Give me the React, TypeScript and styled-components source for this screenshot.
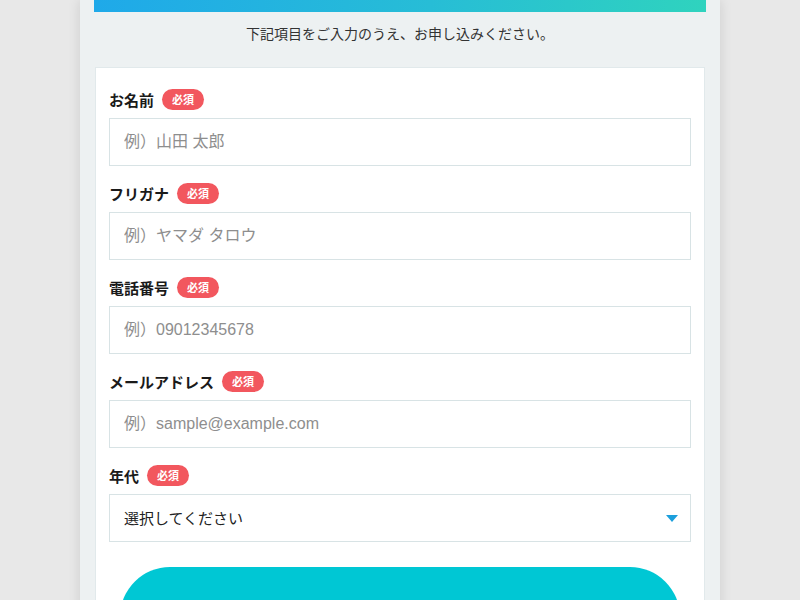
import React from 'react';
import styled, { createGlobalStyle } from 'styled-components';

const GlobalStyle = createGlobalStyle`
  html, body {
    margin: 0;
    padding: 0;
    background: #e8e8e8;
    overflow: hidden;
  }
  body {
    font-family: "Liberation Sans", "Noto Sans CJK JP", sans-serif;
    color: #222;
  }
  * {
    box-sizing: border-box;
  }
`;

const Page = styled.div`
  width: 640px;
  min-height: 600px;
  margin: 0 auto;
  padding: 0 14px;
  background: #edf1f2;
  box-shadow: 0 0 12px rgba(0, 0, 0, 0.12);
`;

const HeaderBar = styled.div`
  height: 12px;
  background: linear-gradient(90deg, #1fa9e9 0%, #27bdd6 55%, #2fd3be 100%);
`;

const Lead = styled.p`
  margin: 0;
  padding: 12px 0 0;
  height: 55px;
  text-align: center;
  font-size: 14px;
  line-height: 20px;
  color: #333;
`;

const Card = styled.form`
  background: #fff;
  border: 1px solid #e1e9eb;
  margin: 0 1px;
  padding: 20px 13px 0;
  display: flex;
  flex-direction: column;
`;

const Field = styled.div`
  display: flex;
  flex-direction: column;
  margin-bottom: 16px;
`;

const LabelRow = styled.label`
  display: flex;
  align-items: center;
  gap: 8px;
  height: 22px;
  margin-bottom: 8px;
  font-size: 15px;
  font-weight: 700;
  color: #1a1a1a;
`;

const Required = styled.span`
  display: inline-flex;
  align-items: center;
  justify-content: center;
  height: 21px;
  padding: 0 10px;
  border-radius: 11px;
  background: #f2575e;
  color: #fff;
  font-size: 11px;
  font-weight: 700;
`;

const TextInput = styled.input`
  width: 100%;
  height: 48px;
  padding: 0 14px;
  border: 1px solid #d8e3e5;
  border-radius: 0;
  background: #fff;
  font-family: "Liberation Sans", "Noto Sans CJK JP", sans-serif;
  font-size: 16px;
  color: #222;
  outline: none;

  &::placeholder {
    color: #8e8e8e;
  }
`;

const SelectWrap = styled.div`
  position: relative;

  &::after {
    content: '';
    position: absolute;
    right: 13px;
    top: 21px;
    border-left: 6px solid transparent;
    border-right: 6px solid transparent;
    border-top: 7px solid #1c9fdc;
    pointer-events: none;
  }
`;

const Select = styled.select`
  width: 100%;
  height: 48px;
  padding: 0 14px;
  border: 1px solid #d8e3e5;
  border-radius: 0;
  background: #fff;
  appearance: none;
  font-family: "Liberation Sans", "Noto Sans CJK JP", sans-serif;
  font-size: 15px;
  color: #222;
  outline: none;
`;

const SubmitButton = styled.button`
  align-self: center;
  width: 560px;
  height: 110px;
  margin-top: 9px;
  border: none;
  border-radius: 50px;
  background: #00c7d4;
  color: #fff;
  font-family: "Liberation Sans", "Noto Sans CJK JP", sans-serif;
  font-size: 20px;
  font-weight: 700;
`;

type TextField = {
  id: string;
  label: string;
  placeholder: string;
  type: string;
};

const fields: TextField[] = [
  { id: 'name', label: 'お名前', placeholder: '例）山田 太郎', type: 'text' },
  { id: 'kana', label: 'フリガナ', placeholder: '例）ヤマダ タロウ', type: 'text' },
  { id: 'tel', label: '電話番号', placeholder: '例）09012345678', type: 'tel' },
  { id: 'mail', label: 'メールアドレス', placeholder: '例）sample@example.com', type: 'email' },
];

const App: React.FC = () => {
  return (
    <>
      <GlobalStyle />
      <Page>
        <HeaderBar />
        <Lead>下記項目をご入力のうえ、お申し込みください。</Lead>

        <Card onSubmit={e => e.preventDefault()}>
          {fields.map(field => (
            <Field key={field.id}>
              <LabelRow htmlFor={field.id}>
                {field.label}
                <Required>必須</Required>
              </LabelRow>
              <TextInput id={field.id} type={field.type} placeholder={field.placeholder} />
            </Field>
          ))}

          <Field>
            <LabelRow htmlFor="age">
              年代
              <Required>必須</Required>
            </LabelRow>
            <SelectWrap>
              <Select id="age" defaultValue="">
                <option value="">選択してください</option>
                <option value="20">20代</option>
                <option value="30">30代</option>
                <option value="40">40代</option>
                <option value="50">50代以上</option>
              </Select>
            </SelectWrap>
          </Field>

          <SubmitButton type="submit">お申し込みはこちら</SubmitButton>
        </Card>
      </Page>
    </>
  );
};

export default App;
